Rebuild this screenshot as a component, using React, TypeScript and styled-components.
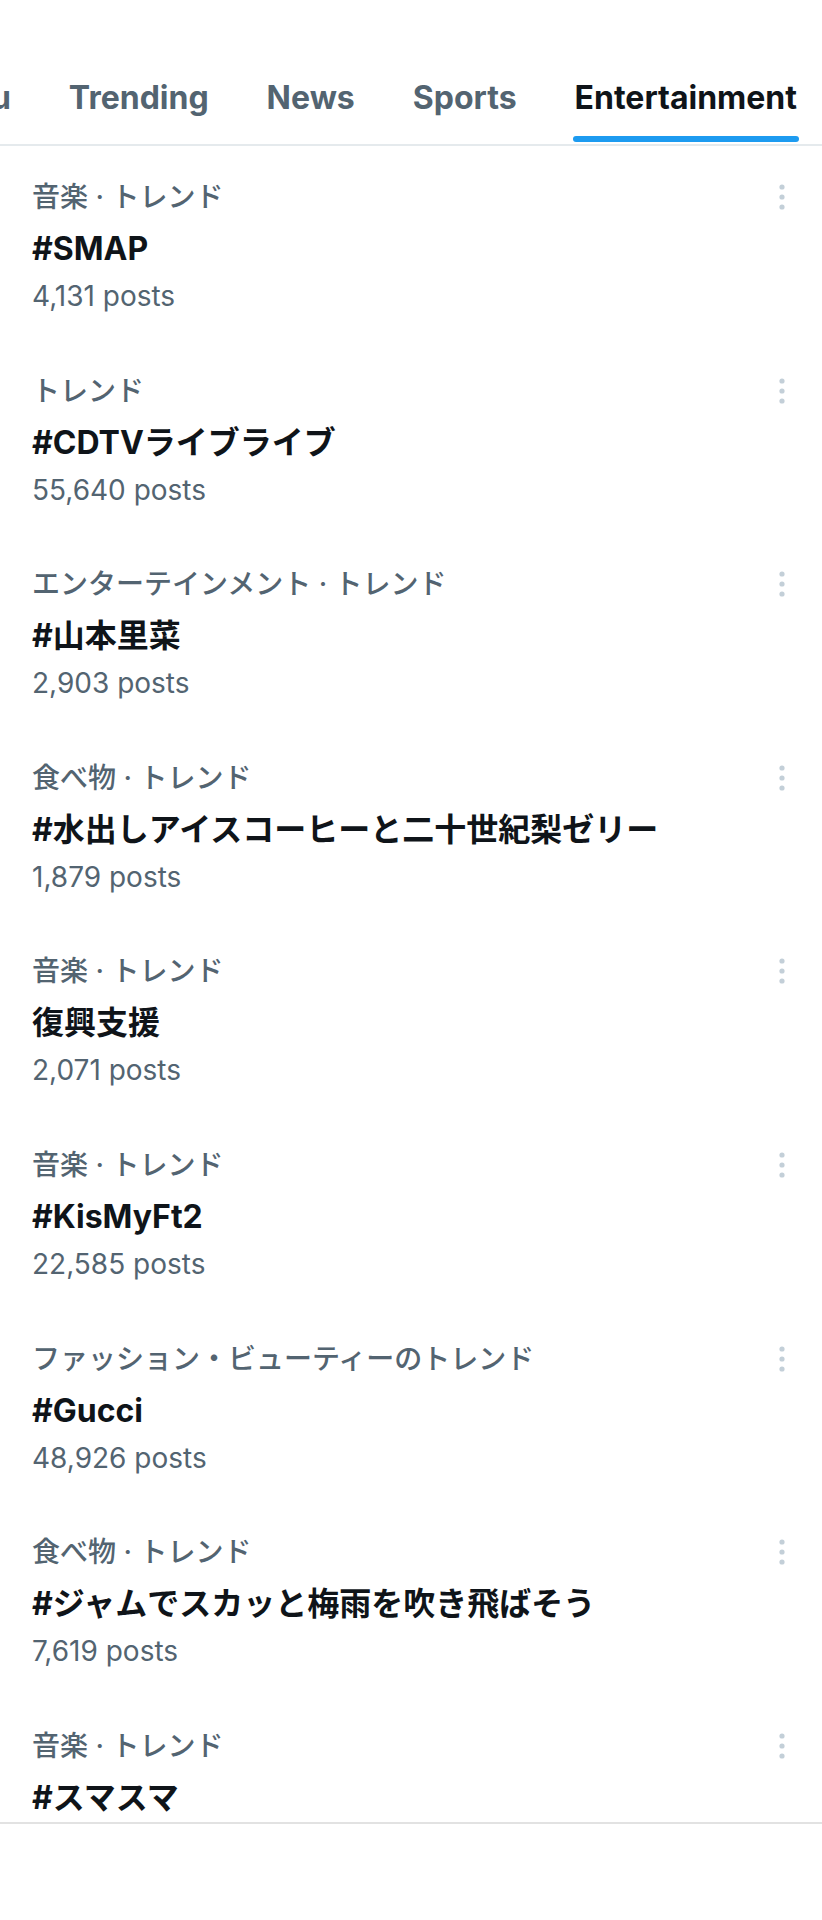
import React from "react";
import styled, { createGlobalStyle } from "styled-components";

const GlobalStyle = createGlobalStyle`
  html, body {
    margin: 0;
    padding: 0;
    background: #ffffff;
  }
  body {
    font-family: "Inter", "Noto Sans CJK JP", sans-serif;
    -webkit-font-smoothing: antialiased;
  }
`;

const Page = styled.div`
  width: 822px;
  min-height: 1920px;
  background: #ffffff;
  display: flex;
  flex-direction: column;
`;

const TabBar = styled.nav`
  height: 144px;
  border-bottom: 2px solid #e5eaed;
  display: flex;
  justify-content: flex-end;
  gap: 58px;
  overflow: hidden;
  padding-right: 25px;
`;

const Tab = styled.div`
  flex: none;
  display: flex;
  flex-direction: column;
  justify-content: flex-end;
  align-items: stretch;
`;

const TabLabel = styled.span<{ $active?: boolean }>`
  font-family: "Inter", sans-serif;
  font-weight: 700;
  font-size: 32px;
  line-height: 40px;
  white-space: nowrap;
  color: ${(p) => (p.$active ? "#0f1419" : "#536471")};
  margin-bottom: 18px;
`;

const Indicator = styled.span<{ $active?: boolean }>`
  display: block;
  height: 6px;
  border-radius: 3px;
  margin: 0 -2px 2px;
  background: ${(p) => (p.$active ? "#1d9bf0" : "transparent")};
`;

const List = styled.section`
  height: 1678px;
  overflow: hidden;
  border-bottom: 2px solid #e2e2e2;
  padding-top: 4px;
  box-sizing: border-box;
`;

const Item = styled.article`
  padding: 27px 28px 27.6px 32px;
  display: flex;
  flex-direction: column;
`;

const TopRow = styled.div`
  display: flex;
  align-items: center;
  justify-content: space-between;
  height: 40px;
`;

const Category = styled.span`
  font-family: "Inter", "Noto Sans CJK JP", sans-serif;
  font-size: 28px;
  font-weight: 500;
  line-height: 40px;
  color: #536471;
  white-space: nowrap;
`;

const MoreButton = styled.button`
  width: 24px;
  height: 40px;
  padding: 0;
  border: 0;
  background: transparent;
  display: flex;
  align-items: center;
  justify-content: center;
`;

const Title = styled.div`
  font-family: "Inter", "Noto Sans CJK JP", sans-serif;
  font-weight: 700;
  font-size: 32px;
  line-height: 44px;
  margin-top: 10px;
  color: #0f1419;
  white-space: nowrap;
`;

const Posts = styled.div`
  font-family: "Inter", "Noto Sans CJK JP", sans-serif;
  font-size: 28px;
  line-height: 40px;
  margin-top: 5px;
  color: #536471;
`;

const MoreIcon = () => (
  <svg width="10" height="30" viewBox="0 0 10 30" aria-hidden="true">
    <circle cx="5" cy="5" r="2.6" fill="#c3cfd8" />
    <circle cx="5" cy="15" r="2.6" fill="#c3cfd8" />
    <circle cx="5" cy="25" r="2.6" fill="#c3cfd8" />
  </svg>
);

const tabs = [
  { label: "For you" },
  { label: "Trending" },
  { label: "News" },
  { label: "Sports" },
  { label: "Entertainment", active: true },
];

const trends = [
  { cat: "音楽 · トレンド", title: "#SMAP", posts: "4,131 posts" },
  { cat: "トレンド", title: "#CDTVライブライブ", posts: "55,640 posts" },
  { cat: "エンターテインメント · トレンド", title: "#山本里菜", posts: "2,903 posts" },
  { cat: "食べ物 · トレンド", title: "#水出しアイスコーヒーと二十世紀梨ゼリー", posts: "1,879 posts" },
  { cat: "音楽 · トレンド", title: "復興支援", posts: "2,071 posts" },
  { cat: "音楽 · トレンド", title: "#KisMyFt2", posts: "22,585 posts" },
  { cat: "ファッション・ビューティーのトレンド", title: "#Gucci", posts: "48,926 posts" },
  { cat: "食べ物 · トレンド", title: "#ジャムでスカッと梅雨を吹き飛ばそう", posts: "7,619 posts" },
  { cat: "音楽 · トレンド", title: "#スマスマ", posts: "11,204 posts" },
];

export default function App() {
  return (
    <Page>
      <GlobalStyle />
      <TabBar>
        {tabs.map((t) => (
          <Tab key={t.label}>
            <TabLabel $active={t.active}>{t.label}</TabLabel>
            <Indicator $active={t.active} />
          </Tab>
        ))}
      </TabBar>
      <List>
        {trends.map((t, i) => (
          <Item key={i}>
            <TopRow>
              <Category>{t.cat}</Category>
              <MoreButton aria-label="More">
                <MoreIcon />
              </MoreButton>
            </TopRow>
            <Title>{t.title}</Title>
            <Posts>{t.posts}</Posts>
          </Item>
        ))}
      </List>
    </Page>
  );
}
